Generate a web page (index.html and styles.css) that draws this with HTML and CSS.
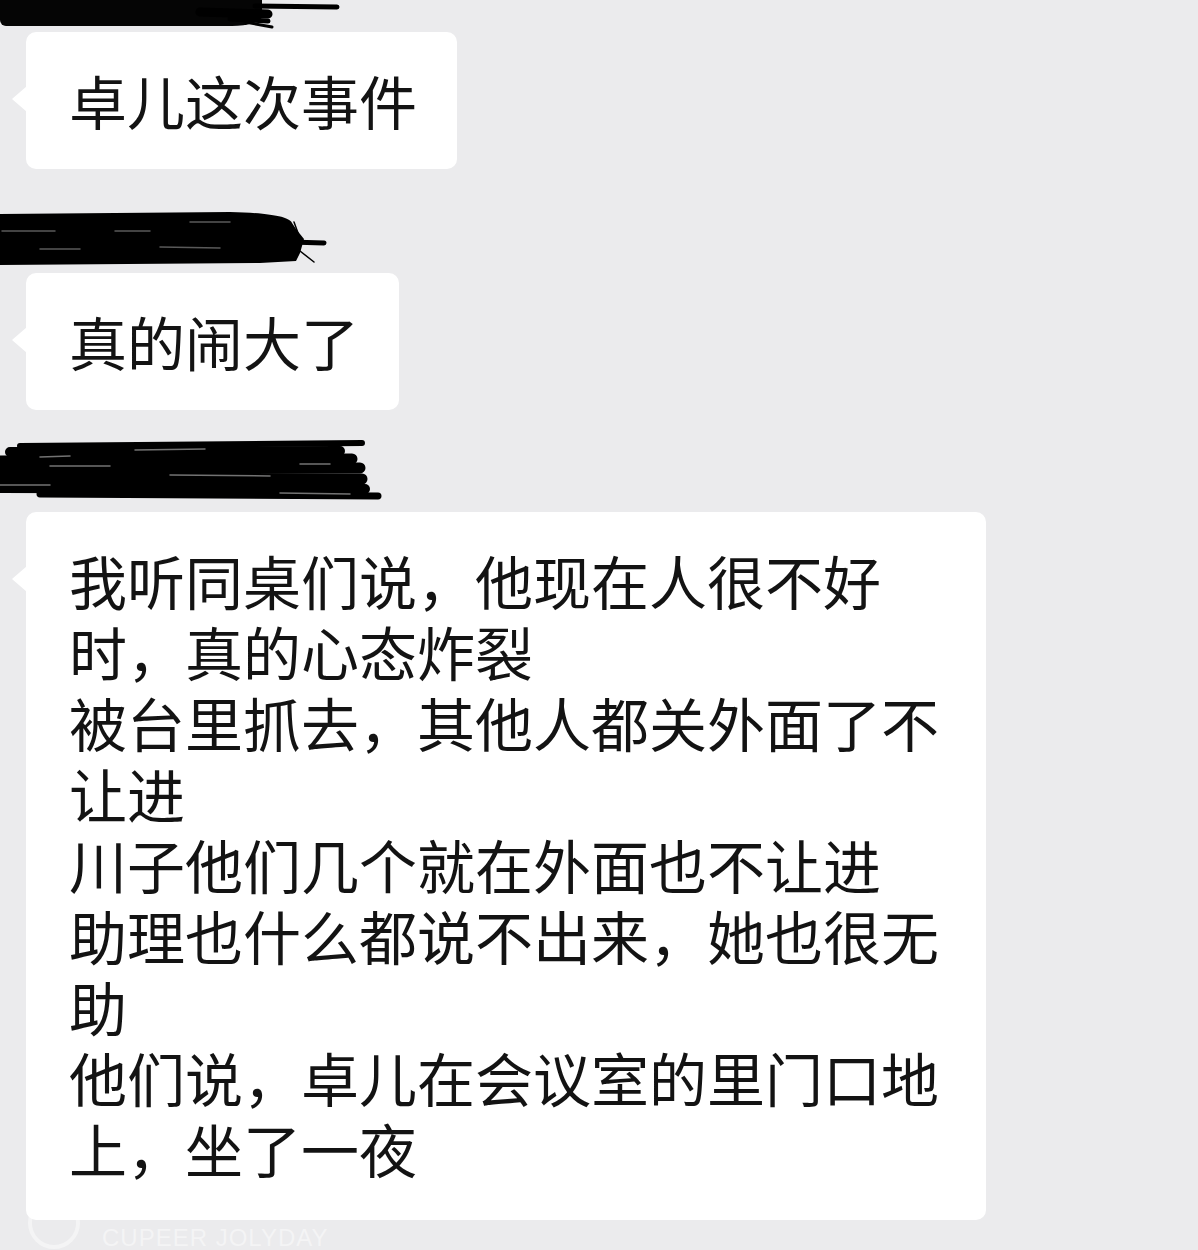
FILE: index.html
```html
<!DOCTYPE html>
<html lang="zh-CN">
<head>
  <meta charset="UTF-8">
  <meta name="viewport" content="width=device-width, initial-scale=1.0">
  <title>聊天记录</title>
  <link rel="stylesheet" href="styles.css">
</head>
<body>

  <div class="chat">

    <!-- 第一条（名字被涂黑，只露出下半截） -->
    <div class="msg first">
      <div class="name short">
        <div class="ink-top"></div>
        <svg class="ink-top-tail" width="360" height="32" viewBox="0 0 360 32">
          <g stroke="#000" stroke-linecap="round" fill="none">
            <path d="M255 6 L337 7" stroke-width="5"/>
            <path d="M200 12 L268 14" stroke-width="9"/>
            <path d="M230 19 L268 21" stroke-width="5"/>
            <path d="M245 22 L272 27" stroke-width="3"/>
          </g>
        </svg>
      </div>
      <div class="bubble">卓儿这次事件</div>
    </div>

    <!-- 第二条 -->
    <div class="msg">
      <div class="name">
        <svg width="360" height="64" viewBox="0 0 360 64">
          <path d="M0 5 L230 3 C270 4 290 8 292 14 L296 20 L304 30 L300 44 L296 52 L260 54 L0 56 Z" fill="#000"/>
          <g stroke="#000" stroke-linecap="round" fill="none">
            <path d="M290 33 L324 34" stroke-width="5"/>
            <path d="M285 22 L300 30" stroke-width="2"/>
            <path d="M294 13 L298 24" stroke-width="1.5"/>
            <path d="M283 45 L298 37" stroke-width="1.5"/>
            <path d="M300 42 L314 53" stroke-width="1.5"/>
          </g>
          <g stroke="#fff" stroke-opacity="0.35" stroke-linecap="round">
            <path d="M2 22 L55 22" stroke-width="1.5"/>
            <path d="M115 22 L150 22" stroke-width="1.5"/>
            <path d="M190 13 L230 13" stroke-width="1.5"/>
            <path d="M160 38 L220 39" stroke-width="1.5"/>
            <path d="M40 40 L80 40" stroke-width="1.5"/>
          </g>
        </svg>
      </div>
      <div class="bubble">真的闹大了</div>
    </div>

    <!-- 第三条 -->
    <div class="msg third">
      <div class="name">
        <svg width="400" height="64" viewBox="0 0 400 64">
          <g stroke="#000" stroke-linecap="round" fill="none">
            <path d="M20 -2 L362 -5" stroke-width="6"/>
            <path d="M10 4 L340 3" stroke-width="10"/>
            <path d="M-10 13 L352 11" stroke-width="11"/>
            <path d="M-10 22 L360 20" stroke-width="11"/>
            <path d="M-10 31 L362 31" stroke-width="11"/>
            <path d="M-10 40 L365 41" stroke-width="10"/>
            <path d="M40 46 L378 48" stroke-width="7"/>
          </g>
          <g stroke="#fff" stroke-opacity="0.45" stroke-linecap="round">
            <path d="M40 9 L70 8" stroke-width="1.5"/>
            <path d="M135 2 L205 1" stroke-width="1.5"/>
            <path d="M170 27 L270 28" stroke-width="1.5"/>
            <path d="M-5 37 L50 37" stroke-width="1.5"/>
            <path d="M300 16 L330 16" stroke-width="1.5"/>
            <path d="M280 45 L350 46" stroke-width="1.5"/>
            <path d="M50 18 L110 18" stroke-width="1.5"/>
          </g>
        </svg>
      </div>
      <div class="bubble long">我听同桌们说，他现在人很不好时，真的心态炸裂
被台里抓去，其他人都关外面了不让进
川子他们几个就在外面也不让进
助理也什么都说不出来，她也很无助
他们说，卓儿在会议室的里门口地上，坐了一夜</div>
    </div>

  </div>

  <!-- 水印 -->
  <div class="watermark">
    <span class="wm-logo"></span>
    <span class="wm-text">CUPEER JOLYDAY</span>
  </div>

</body>
</html>
```

FILE: styles.css
```css
/* 页面基础 */
body {
  margin: 0;
  background: #ebebed;
  font-family: "Noto Sans CJK SC", "Noto Sans", sans-serif;
  color: #131313;
  overflow: hidden;
  height: 1250px;
  position: relative;
}

.chat {
  display: flex;
  flex-direction: column;
  align-items: flex-start;
}

.msg {
  display: flex;
  flex-direction: column;
  align-items: flex-start;
  margin-top: 40px;
}

.msg.first {
  margin-top: 0;
}

.msg.third {
  margin-top: 38px;
}

.name {
  height: 64px;
}

.name svg {
  display: block;
  overflow: visible;
}

/* 顶部被截断的涂黑 */
.name.short {
  height: 32px;
  width: 360px;
  position: relative;
}

.ink-top {
  width: 262px;
  height: 26px;
  background: #050505;
  border-radius: 0 0 30px 6px / 0 0 10px 6px;
}

.ink-top-tail {
  position: absolute;
  top: 0;
  left: 0;
}

/* 气泡 */
.bubble {
  position: relative;
  margin-left: 26px;
  background: #fff;
  border-radius: 10px;
  padding: 33px 40px 33px 43px;
  font-size: 58px;
  line-height: 71px;
  white-space: pre-line;
  box-sizing: border-box;
  max-width: 960px;
}

.bubble.long {
  padding-bottom: 36px;
}

.bubble::before {
  content: "";
  position: absolute;
  left: -14px;
  top: 54px;
  border-top: 13px solid transparent;
  border-bottom: 13px solid transparent;
  border-right: 15px solid #fff;
}

/* 底部水印 */
.watermark {
  position: absolute;
  left: 28px;
  top: 1194px;
  display: flex;
  align-items: center;
  gap: 22px;
  opacity: 0.45;
}

.wm-logo {
  width: 52px;
  height: 52px;
  border-radius: 50%;
  border: 4px solid #fff;
  box-sizing: border-box;
}

.wm-text {
  color: #fff;
  font-family: "Liberation Sans", sans-serif;
  font-size: 24px;
  letter-spacing: 1px;
  margin-top: 30px;
}
```
